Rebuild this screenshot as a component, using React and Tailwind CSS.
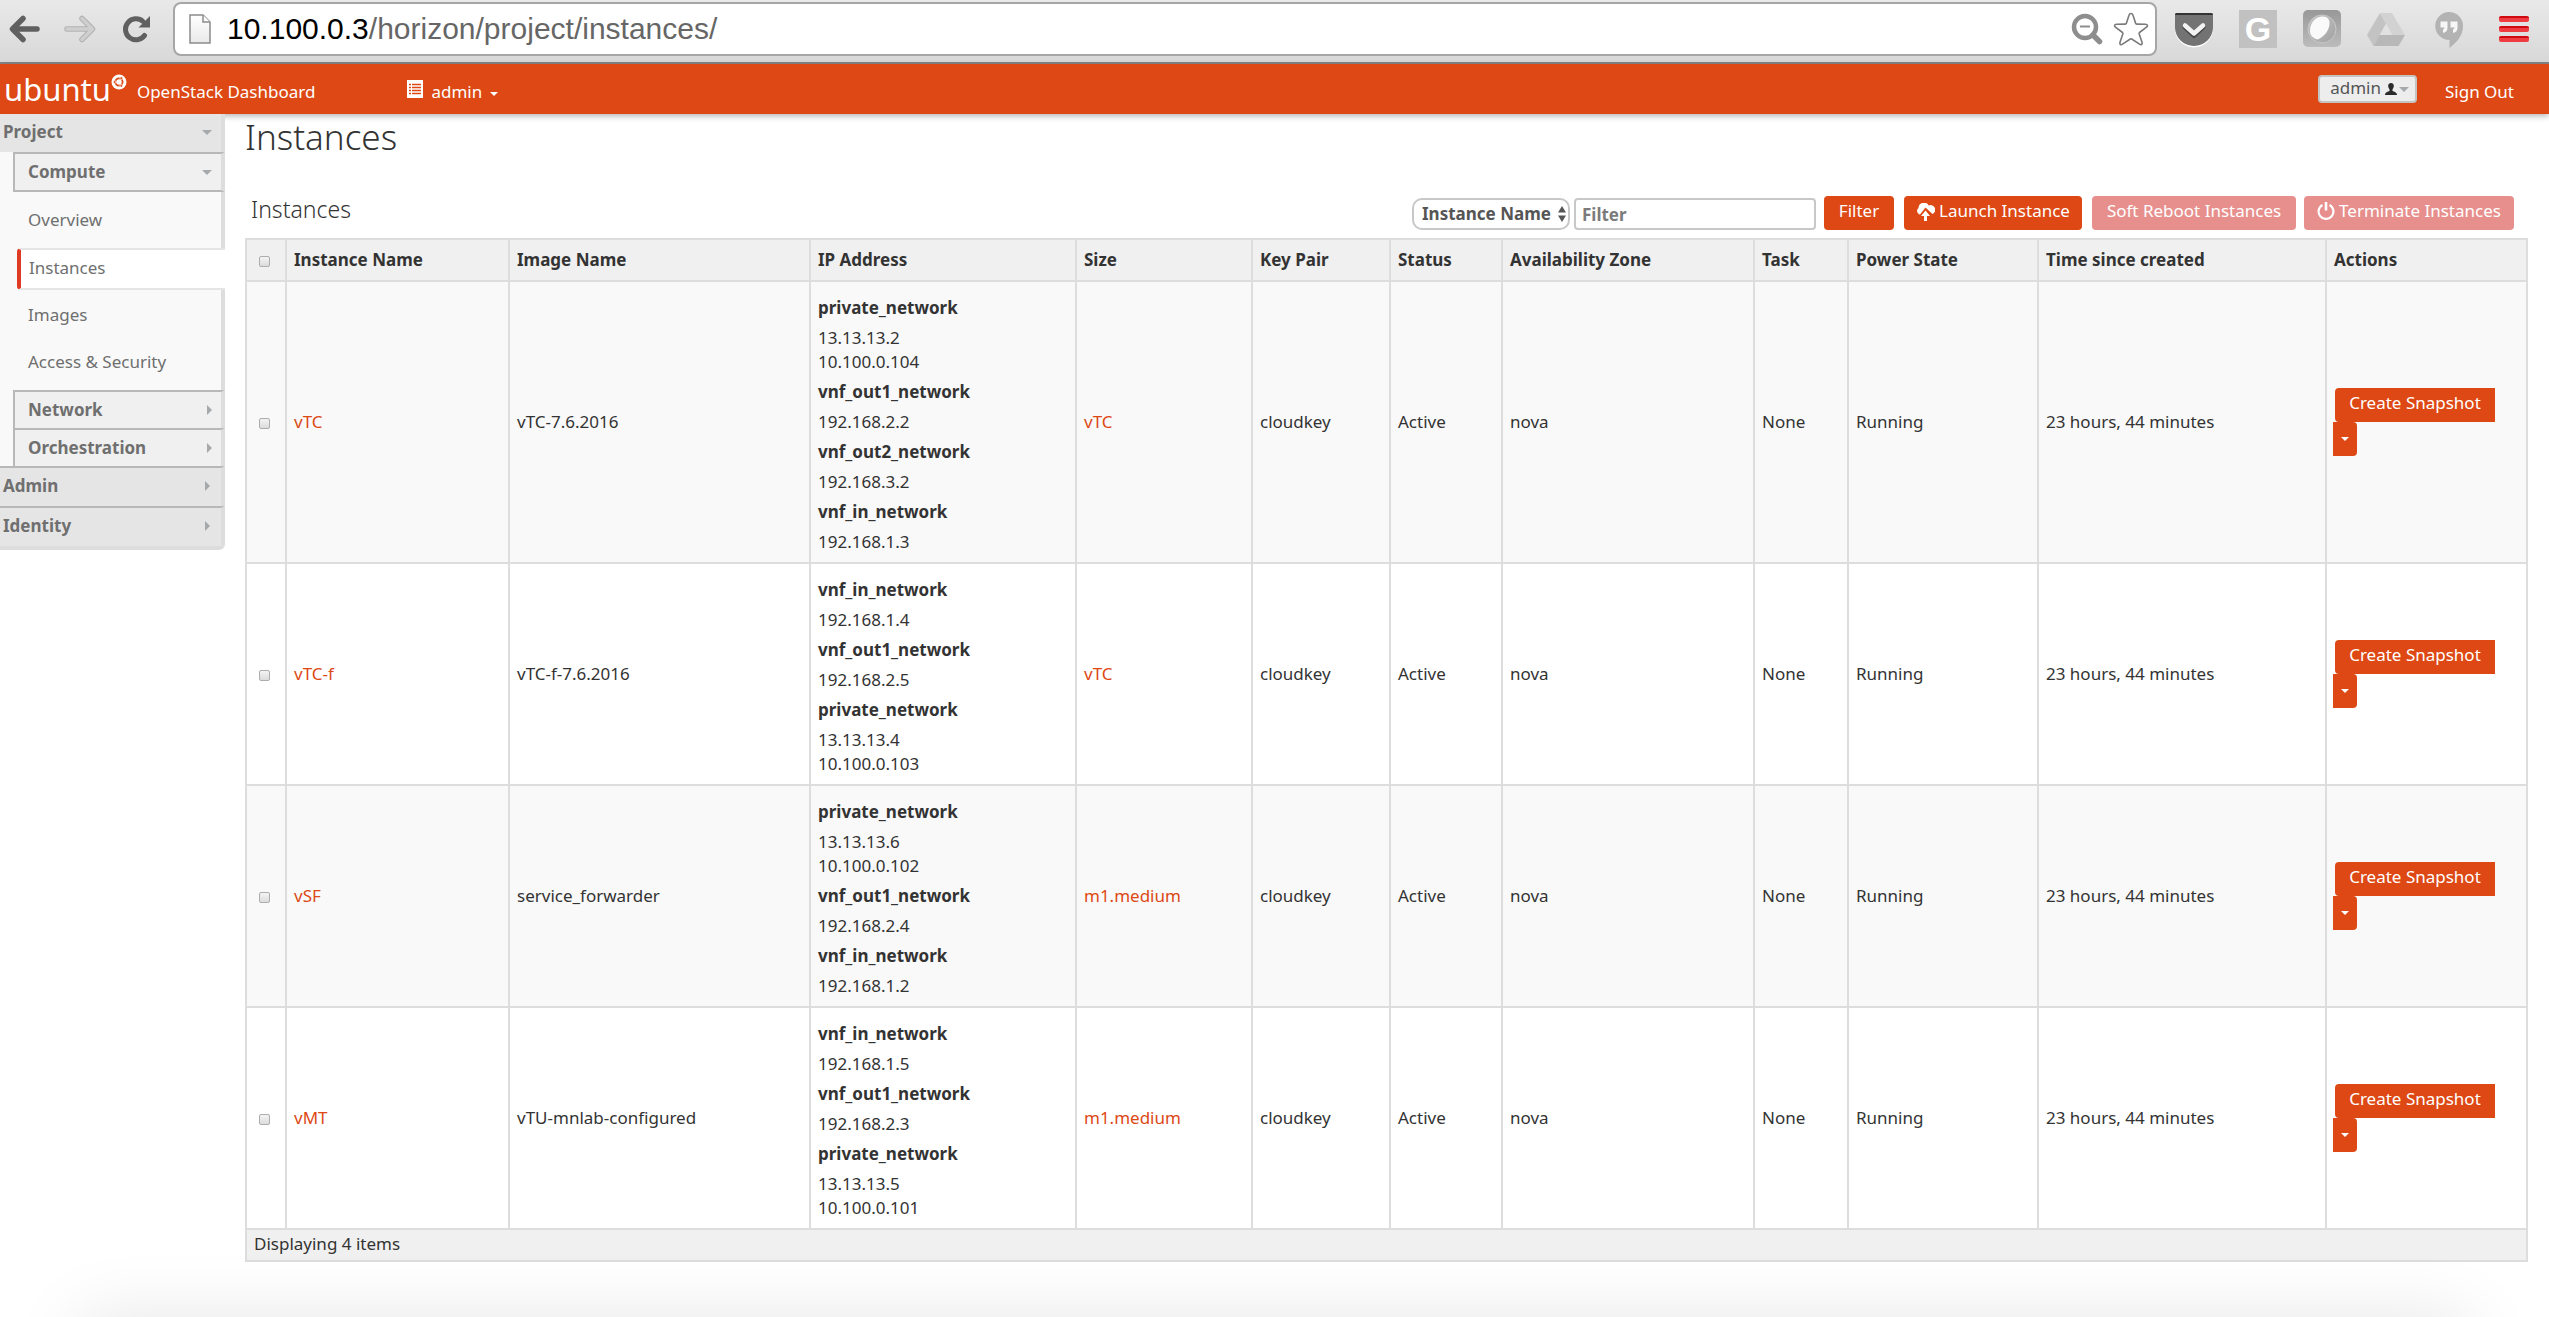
const columns = [
  { label: 'Instance Name', width: 'w-[223px]' },
  { label: 'Image Name', width: 'w-[301px]' },
  { label: 'IP Address', width: 'w-[266px]' },
  { label: 'Size', width: 'w-[176px]' },
  { label: 'Key Pair', width: 'w-[138px]' },
  { label: 'Status', width: 'w-[112px]' },
  { label: 'Availability Zone', width: 'w-[252px]' },
  { label: 'Task', width: 'w-[94px]' },
  { label: 'Power State', width: 'w-[190px]' },
  { label: 'Time since created', width: 'w-[288px]' },
  { label: 'Actions', width: 'w-[201px]' },
];

const instances = [
  {
    name: 'vTC',
    image: 'vTC-7.6.2016',
    size: 'vTC',
    networks: [
      ['private_network', ['13.13.13.2', '10.100.0.104']],
      ['vnf_out1_network', ['192.168.2.2']],
      ['vnf_out2_network', ['192.168.3.2']],
      ['vnf_in_network', ['192.168.1.3']],
    ],
  },
  {
    name: 'vTC-f',
    image: 'vTC-f-7.6.2016',
    size: 'vTC',
    networks: [
      ['vnf_in_network', ['192.168.1.4']],
      ['vnf_out1_network', ['192.168.2.5']],
      ['private_network', ['13.13.13.4', '10.100.0.103']],
    ],
  },
  {
    name: 'vSF',
    image: 'service_forwarder',
    size: 'm1.medium',
    networks: [
      ['private_network', ['13.13.13.6', '10.100.0.102']],
      ['vnf_out1_network', ['192.168.2.4']],
      ['vnf_in_network', ['192.168.1.2']],
    ],
  },
  {
    name: 'vMT',
    image: 'vTU-mnlab-configured',
    size: 'm1.medium',
    networks: [
      ['vnf_in_network', ['192.168.1.5']],
      ['vnf_out1_network', ['192.168.2.3']],
      ['private_network', ['13.13.13.5', '10.100.0.101']],
    ],
  },
];

function CaretDown({ className }) {
  return (
    <svg viewBox="0 0 10 5" aria-hidden="true" className={className}>
      <path d="M0 0H10L5 5Z" fill="currentColor" />
    </svg>
  );
}

function CaretRight({ className }) {
  return (
    <svg viewBox="0 0 5 10" aria-hidden="true" className={className}>
      <path d="M0 0V10L5 5Z" fill="currentColor" />
    </svg>
  );
}

function BrowserBar() {
  return (
    <div className="flex h-16 items-start border-b-2 border-[#858585] bg-linear-to-b from-[#e9e9e9] to-[#d8d8d8] pr-5 pl-[9px]">
      <button aria-label="Back" className="mt-[15px] h-7 w-8">
        <svg viewBox="0 0 32 28" className="h-7 w-8" fill="none" stroke="#606060" strokeWidth="5.5" strokeLinecap="round" strokeLinejoin="round">
          <path d="M14 3.5L3.5 14L14 24.500M4 14H28" />
        </svg>
      </button>
      <button aria-label="Forward" className="mt-[15px] ml-[23px] h-7 w-8">
        <svg viewBox="0 0 32 28" className="h-7 w-8">
          <g fill="none" strokeLinecap="round" strokeLinejoin="round">
            <path d="M18 3.500L28.500 14L18 24.500M28 14H3" stroke="#b2b2b2" strokeWidth="5.500" />
            <path d="M18 3.500L28.500 14L18 24.500M28 14H3" stroke="#cfcfcf" strokeWidth="3.500" />
          </g>
        </svg>
      </button>
      <button aria-label="Reload" className="mt-[15px] ml-[26px] h-7 w-7">
        <svg viewBox="0 0 28 28" className="h-7 w-7">
          <path d="M22.500 20.500A10.500 10.500 0 1 1 21 6.500" fill="none" stroke="#606060" strokeWidth="5" strokeLinecap="round" />
          <path d="M28 1V12.500H16.500Z" fill="#606060" />
        </svg>
      </button>
      <div className="mt-0.5 ml-[23px] flex h-[54px] min-w-0 flex-1 items-center rounded-lg border-2 border-[#a6a6a6] bg-white pr-1.5 pl-3.5">
        <svg viewBox="0 0 22 30" aria-hidden="true" className="h-[30px] w-[22px] shrink-0">
          <defs>
            <linearGradient id="sheet" x1="0" y1="0" x2="0" y2="1">
              <stop offset="0" stopColor="#fff" />
              <stop offset="1" stopColor="#e9e9e9" />
            </linearGradient>
          </defs>
          <path d="M1 1H14L21 8V29H1Z" fill="url(#sheet)" stroke="#8c8c8c" strokeWidth="1.500" />
          <path d="M14 1V8H21" fill="#fff" stroke="#8c8c8c" strokeWidth="1.500" />
        </svg>
        <div className="ml-4 flex-1 font-['Liberation_Sans',sans-serif] text-[30px] leading-[50px] text-[#666]">
          <span className="text-black">10.100.0.3</span>/horizon/project/instances/
        </div>
        <svg viewBox="0 0 32 32" aria-hidden="true" className="size-8 shrink-0" fill="none" stroke="#8e8e8e">
          <circle cx="14" cy="14" r="11" strokeWidth="4.500" />
          <path d="M22 22L28.500 28.500" strokeWidth="5.500" strokeLinecap="round" />
          <path d="M9 13.500H19" strokeWidth="2" />
        </svg>
        <svg viewBox="0 0 36 36" aria-hidden="true" className="ml-2.5 size-9 shrink-0">
          <path
            d="M18 2.500C19.200 2.500 19.700 3.300 20 4.300L22.600 12.300C22.800 12.900 23 13.100 23.700 13.100L32.500 13.300C34.800 13.400 35 15 33.500 16.200L26.500 21.500C26 21.900 25.900 22.200 26.100 22.800L29 31.300C29.700 33.500 28.200 34.400 26.500 33.200L18.700 28C18.200 27.700 17.800 27.700 17.300 28L9.500 33.200C7.800 34.400 6.300 33.500 7 31.300L9.900 22.800C10.100 22.200 10 21.900 9.500 21.500L2.500 16.200C1 15 1.200 13.400 3.500 13.300L12.300 13.100C13 13.100 13.200 12.900 13.400 12.300L16 4.300C16.300 3.300 16.800 2.500 18 2.500Z"
            fill="#fff"
            stroke="#7a7a7a"
            strokeWidth="1.600"
          />
        </svg>
      </div>
      <button aria-label="Save to Pocket" className="mt-[13px] ml-[18px] h-9 w-[38px]">
        <svg viewBox="0 0 38 36" className="h-9 w-[38px]">
          <path d="M0 2.500H38V16A19 18.500 0 0 1 0 16Z" fill="#fff" />
          <path d="M0 1.500Q0 0 2 0H36Q38 0 38 1.500V14.500A19 18.500 0 0 1 0 14.500Z" fill="#737373" />
          <path d="M0 1.500Q0 0 2 0H36Q38 0 38 2H0Z" fill="#333" />
          <path d="M10 14L19 22.500L28 14" fill="none" stroke="#444" strokeWidth="5" strokeLinecap="round" strokeLinejoin="round" />
          <path d="M10 12.500L19 20.500L28 12.500" fill="none" stroke="#f2f2f2" strokeWidth="4.500" strokeLinecap="round" strokeLinejoin="round" />
        </svg>
      </button>
      <button aria-label="G extension" className="mt-2.5 ml-[26px] flex h-[38px] w-[38px] items-center justify-center bg-[#c1c1c1] font-['Liberation_Sans',sans-serif] text-[34px] leading-[38px] font-bold text-white">
        G
      </button>
      <button aria-label="Orb extension" className="mt-2.5 ml-[26px] h-[37px] w-[38px]">
        <svg viewBox="0 0 38 37" className="h-[37px] w-[38px]">
          <defs>
            <linearGradient id="tile" x1="0" y1="0" x2="0" y2="1">
              <stop offset="0" stopColor="#989898" />
              <stop offset="1" stopColor="#bcbcbc" />
            </linearGradient>
            <linearGradient id="orb" x1="0" y1="0" x2="1" y2="1">
              <stop offset="0" stopColor="#c4c4c4" />
              <stop offset="1" stopColor="#a2a2a2" />
            </linearGradient>
          </defs>
          <rect width="38" height="37" rx="5" fill="url(#tile)" />
          <circle cx="19" cy="19" r="14" fill="url(#orb)" stroke="#c8c8c8" />
          <path d="M7 21C7 13 12 7 19 6.500C24 6 27 9 26.500 14C26 21 21 27 14.500 29.500C10 28.500 7 25 7 21Z" fill="#fafafa" />
        </svg>
      </button>
      <button aria-label="Drive" className="mt-[13px] ml-[26px] h-[33px] w-[38px]">
        <svg viewBox="0 0 38 33" className="h-[33px] w-[38px]">
          <path d="M13 0L19 10.500L6.500 33L0 22Z" fill="#c3c3c3" />
          <path d="M13 0H25L38 22H25.500Z" fill="#d2d2d2" />
          <path d="M12.500 22H38L31.500 33H6.500Z" fill="#b8b8b8" />
        </svg>
      </button>
      <button aria-label="Hangouts" className="mt-3 ml-[30px] h-9 w-7">
        <svg viewBox="0 0 28 36" className="h-9 w-7">
          <path d="M14 0A14 14 0 0 1 28 14C28 24 21 31 14.500 36V28A14 14 0 0 1 14 0Z" fill="#b3b3b3" />
          <path d="M5.500 9.500H12.500V16Q12.500 20 8 21V17.500Q9.500 17 9.500 15.500H5.500ZM15.500 9.500H22.500V16Q22.500 20 18 21V17.500Q19.500 17 19.500 15.500H15.500Z" fill="#f6f6f6" />
        </svg>
      </button>
      <button aria-label="Browser menu" className="mt-4 ml-9 flex w-[30px] flex-col gap-1">
        <span className="h-1.5 w-full rounded-xs border-t-2 border-[#cf0a10] bg-[#ee3c40]" />
        <span className="h-1.5 w-full rounded-xs border-t-2 border-[#cf0a10] bg-[#ee3c40]" />
        <span className="h-1.5 w-full rounded-xs border-t-2 border-[#cf0a10] bg-[#ee3c40]" />
      </button>
    </div>
  );
}

function SiteHeader() {
  return (
    <header className="relative flex h-[50px] items-center bg-[#dd4814] pr-[35px] pl-1 text-white shadow-[0_2px_6px_rgba(0,0,0,0.3)]">
      <a href="#home" className="flex items-start text-[31px] leading-[50px]">
        ubuntu
        <svg viewBox="0 0 16 16" aria-hidden="true" className="mt-2.5 size-4">
          <circle cx="8" cy="8" r="7.500" fill="#fff" />
          <circle cx="8" cy="8" r="3.600" fill="none" stroke="#dd4814" strokeWidth="1.800" />
          <g fill="#dd4814" stroke="#fff" strokeWidth="0.700">
            <circle cx="3.600" cy="8" r="1.400" />
            <circle cx="10.300" cy="4.200" r="1.400" />
            <circle cx="10.300" cy="11.800" r="1.400" />
          </g>
        </svg>
      </a>
      <span className="ml-2.5 pt-1.5">OpenStack Dashboard</span>
      <button className="ml-[92px] flex items-center pt-1.5">
        <svg viewBox="0 0 16 18" aria-hidden="true" className="mb-1.5 h-[18px] w-4">
          <rect width="16" height="18" fill="#fff" />
          <path d="M2 4.500H14M2 7.500H14M2 10.500H14M2 13.500H14" stroke="#dd4814" strokeWidth="1.500" />
          <path d="M4.500 3V16" stroke="#fff" strokeWidth="1" />
        </svg>
        <span className="ml-2">admin</span>
        <CaretDown className="mt-1 ml-2 h-1 w-2" />
      </button>
      <button className="mr-7 ml-auto flex h-7 items-center rounded-sm border-2 border-[#c4c4c4] bg-[#ededed] pr-1.5 pl-2.5 text-[#555]">
        <span className="pb-0.5">admin</span>
        <svg viewBox="0 0 12 12" aria-hidden="true" className="ml-1 size-3 text-[#2b2b2b]">
          <path d="M6 0C8 0 9 1.400 8.800 3.200C8.700 4.600 8 5.500 7.500 6.200V8C9 8.800 12 9 12 12H0C0 9 3 8.800 4.500 8V6.200C4 5.500 3.300 4.600 3.200 3.200C3 1.400 4 0 6 0Z" fill="currentColor" />
        </svg>
        <CaretDown className="ml-0.5 h-[5px] w-2.5 text-[#a5a9ac]" />
      </button>
      <a href="#sign-out" className="pt-1.5">Sign Out</a>
    </header>
  );
}

function Sidebar() {
  const link = 'flex items-center border-r-4 border-[#ddd] pl-7';
  const group =
    'flex w-[212px] items-center justify-between self-end border-t-2 border-r-4 border-l-2 border-t-[#b8b8b8] border-r-[#ddd] border-l-[#b8b8b8] bg-[#f0f0f0] pr-[9px] pl-[13px] text-left font-bold';
  const section = 'flex w-full items-center justify-between border-r-4 border-r-[#ddd] bg-[#e5e5e5] pr-[11px] pl-[3px] text-left font-bold';
  return (
    <nav className="relative flex w-[225px] shrink-0 flex-col self-start overflow-hidden rounded-br-md border-b-4 border-[#ddd] bg-[#f9f9f9] text-[#6f6f6f]">
      <button className={`${section} h-[38px] pb-0.5`}>
        Project
        <CaretDown className="-mr-0.5 h-[5px] w-2.5 text-[#a5a9ac]" />
      </button>
      <button className={`${group} h-10 border-b-2 border-b-[#b8b8b8]`}>
        Compute
        <CaretDown className="h-[5px] w-2.5 text-[#a5a9ac]" />
      </button>
      <a href="#overview" className={`${link} h-14`}>Overview</a>
      <a href="#instances" aria-current="page" className="ml-[17px] flex h-[42px] items-center rounded-l-sm border-y-2 border-l-4 border-y-[#e5e5e5] border-l-[#df3b24] bg-white pb-0.5 pl-2">
        Instances
      </a>
      <a href="#images" className={`${link} h-[50px]`}>Images</a>
      <a href="#access" className={`${link} h-[50px] pb-1.5`}>Access &amp; Security</a>
      <button className={`${group} h-[38px]`}>
        Network
        <CaretRight className="h-2.5 w-[5px] text-[#a5a9ac]" />
      </button>
      <button className={`${group} h-[38px]`}>
        Orchestration
        <CaretRight className="h-2.5 w-[5px] text-[#a5a9ac]" />
      </button>
      <button className={`${section} h-10 border-t-2 border-t-[#b8b8b8] pb-0.5`}>
        Admin
        <CaretRight className="h-2.5 w-[5px] text-[#a5a9ac]" />
      </button>
      <button className={`${section} h-10 border-t-2 border-t-[#b8b8b8] pb-0.5`}>
        Identity
        <CaretRight className="h-2.5 w-[5px] text-[#a5a9ac]" />
      </button>
    </nav>
  );
}

function Toolbar() {
  return (
    <div className="mb-2 flex h-[34px] items-end pr-3 pl-1.5">
      <h2 className="mr-auto self-start text-[23px] leading-[26px] font-light">Instances</h2>
      <div className="relative">
        <select
          aria-label="Filter field"
          defaultValue="Instance Name"
          className="block h-8 w-[158px] appearance-none rounded-[10px] border-2 border-[#c8c8c8] bg-white pl-2 font-bold text-[#555]"
        >
          <option>Instance Name</option>
        </select>
        <svg viewBox="0 0 8 16" aria-hidden="true" className="pointer-events-none absolute top-2 right-1 h-4 w-2">
          <path d="M0 6.500L4 0L8 6.500ZM0 9.500H8L4 16Z" fill="#555" />
        </svg>
      </div>
      <input
        type="text"
        aria-label="Filter"
        placeholder="Filter"
        className="ml-1 h-8 w-[242px] rounded-sm border-2 border-[#c8c8c8] bg-white px-1.5 font-bold text-[#555] placeholder:text-[#7b7b7b]"
      />
      <button className="ml-2 h-[34px] w-[70px] rounded-sm bg-[#dd4814] pb-1 text-white">Filter</button>
      <button className="ml-2.5 flex h-[34px] w-[178px] items-center justify-center rounded-sm bg-[#dd4814] pb-1 whitespace-nowrap text-white">
        <svg viewBox="0 0 19 18" aria-hidden="true" className="mt-0.5 mr-1 h-[18px] w-[19px]">
          <path d="M3.500 11.500A3.800 3.800 0 0 1 2.500 5A5.500 5.500 0 0 1 12.800 2.500A4.300 4.300 0 0 1 16.500 11L9.500 4.500L4 11.500Z" fill="#fff" />
          <path d="M9.500 7.500L14 13H11V18H8V13H5Z" fill="#fff" />
        </svg>
        Launch Instance
      </button>
      <button disabled className="ml-2.5 h-[34px] w-[204px] rounded-sm bg-[#e78f8d] pb-1 whitespace-nowrap text-white">
        Soft Reboot Instances
      </button>
      <button disabled className="ml-2 flex h-[34px] w-[210px] items-center justify-center rounded-sm bg-[#e78f8d] pb-1 whitespace-nowrap text-white">
        <svg viewBox="0 0 18 18" aria-hidden="true" className="mr-1 size-[18px]" fill="none" stroke="#fff" strokeWidth="2.200">
          <path d="M5.500 3A7.400 7.400 0 1 0 12.500 3" />
          <path d="M9 0V8.500" strokeWidth="2.600" />
        </svg>
        Terminate Instances
      </button>
    </div>
  );
}

function RowCheckbox({ label }) {
  return (
    <input
      type="checkbox"
      aria-label={label}
      className="mt-0.5 ml-[5px] block size-[11px] appearance-none rounded-xs border border-[#adadad] bg-linear-to-b from-[#f4f4f4] to-[#dcdcdc]"
    />
  );
}

function InstancesTable() {
  const cell = 'border-2 border-[#ddd] px-[7px]';
  const link = 'text-[#dd4814]';
  return (
    <table className="w-full table-fixed border-collapse text-left text-[#333]">
      <colgroup>
        <col className="w-10" />
        {columns.map((c) => (
          <col key={c.label} className={c.width} />
        ))}
      </colgroup>
      <thead>
        <tr className="h-[42px] bg-[#f0f0f0]">
          <th className={cell}>
            <RowCheckbox label="Select all" />
          </th>
          {columns.map((c) => (
            <th key={c.label} scope="col" className={`${cell} font-bold`}>{c.label}</th>
          ))}
        </tr>
      </thead>
      <tbody>
        {instances.map((vm) => (
          <tr key={vm.name} className="odd:bg-[#f9f9f9] even:bg-white">
            <td className={cell}>
              <RowCheckbox label={`Select ${vm.name}`} />
            </td>
            <td className={cell}>
              <a href="#instance" className={link}>{vm.name}</a>
            </td>
            <td className={cell}>{vm.image}</td>
            <td className={`${cell} pt-3.5 pb-2`}>
              <div className="flex flex-col gap-1.5">
                {vm.networks.map(([network, ips]) => (
                  <div key={network}>
                    <div className="mb-1.5 font-bold">{network}</div>
                    <ul>
                      {ips.map((ip) => (
                        <li key={ip}>{ip}</li>
                      ))}
                    </ul>
                  </div>
                ))}
              </div>
            </td>
            <td className={cell}>
              <button className={link}>{vm.size}</button>
            </td>
            <td className={cell}>cloudkey</td>
            <td className={cell}>Active</td>
            <td className={cell}>nova</td>
            <td className={cell}>None</td>
            <td className={cell}>Running</td>
            <td className={cell}>23 hours, 44 minutes</td>
            <td className="border-2 border-[#ddd] px-1.5">
              <div className="flex flex-col items-start">
                <button className="ml-0.5 h-[34px] w-40 rounded-l-sm bg-[#dd4814] pb-1 whitespace-nowrap text-white">Create Snapshot</button>
                <button aria-label={`More actions for ${vm.name}`} className="flex h-[34px] w-6 items-center justify-center rounded-r-sm bg-[#dd4814] text-white">
                  <CaretDown className="h-1 w-2" />
                </button>
              </div>
            </td>
          </tr>
        ))}
      </tbody>
      <tfoot>
        <tr className="bg-[#f0f0f0]">
          <td colSpan={12} className="border-2 border-[#ddd] px-[7px] pt-0.5 pb-1">
            Displaying 4 items
          </td>
        </tr>
      </tfoot>
    </table>
  );
}

export default function App() {
  return (
    <div className="relative flex min-h-screen flex-col overflow-hidden bg-white font-['Noto_Sans',sans-serif] text-[17px] leading-6 text-[#333]">
      <BrowserBar />
      <SiteHeader />
      <div className="flex flex-1 items-start">
        <Sidebar />
        <main className="min-w-0 flex-1 pr-[23px] pl-5">
          <h1 className="mb-9 text-[35px] leading-[46px] font-light">Instances</h1>
          <Toolbar />
          <InstancesTable />
        </main>
      </div>
      <div aria-hidden="true" className="pointer-events-none absolute inset-x-20 top-full h-20 shadow-[0_0_70px_rgba(0,0,0,0.1)]" />
    </div>
  );
}
